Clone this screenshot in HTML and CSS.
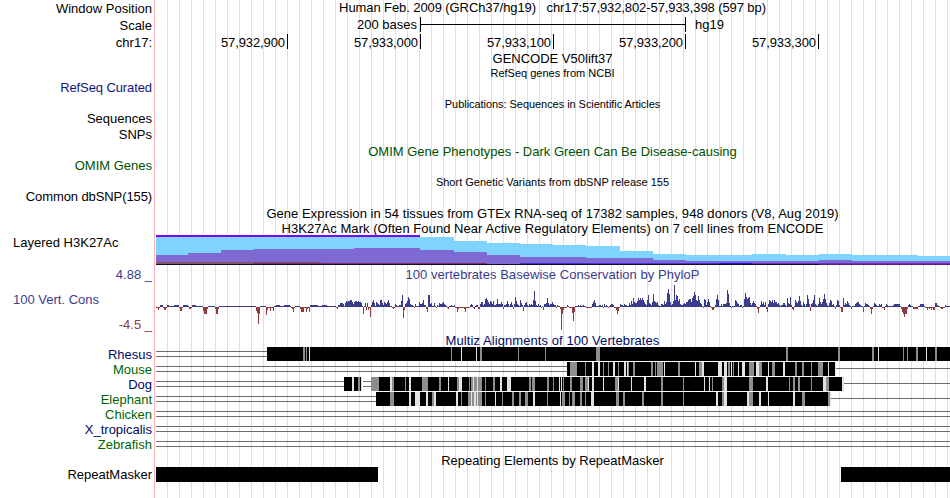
FILE: index.html
```
<!DOCTYPE html>
<html lang="en">
  <head>
    <meta charset="utf-8">
    <title>hg19 chr17:57,932,802-57,933,398</title>
    <link rel="stylesheet" href="styles.css">
  </head>
  <body>
    <main class="browser">
      <div class="row h17 top">
        <div class="label">Window Position</div>
        <div class="title position">Human Feb. 2009 (GRCh37/hg19) &nbsp; chr17:57,932,802-57,933,398 (597 bp)</div>
      </div>
      <div class="row h17 top">
        <div class="label">Scale</div>
        <div class="scale">
          <span class="scale-size">200 bases</span>
          <span class="scale-bar"></span>
          <span class="scale-db">hg19</span>
        </div>
      </div>
      <div class="row h17">
        <div class="label">chr17:</div>
        <div class="ruler">
          <span>57,932,900</span><span>57,933,000</span><span>57,933,100</span><span>57,933,200</span><span>57,933,300</span>
        </div>
      </div>

      <div class="row">
        <div class="label"></div>
        <div class="title">GENCODE V50lift37</div>
      </div>
      <div class="row">
        <div class="label"></div>
        <div class="title small">RefSeq genes from NCBI</div>
      </div>
      <div class="row raised">
        <div class="label navy tight">RefSeq Curated</div>
      </div>
      <div class="row pad">
        <div class="label"></div>
        <div class="title small pubs">Publications: Sequences in Scientific Articles</div>
      </div>
      <div class="row h16">
        <div class="label">Sequences</div>
      </div>
      <div class="row h16">
        <div class="label">SNPs</div>
      </div>
      <div class="row pad">
        <div class="label"></div>
        <div class="title green">OMIM Gene Phenotypes - Dark Green Can Be Disease-causing</div>
      </div>
      <div class="row">
        <div class="label green">OMIM Genes</div>
      </div>
      <div class="row h16 pad2">
        <div class="label"></div>
        <div class="title small">Short Genetic Variants from dbSNP release 155</div>
      </div>
      <div class="row h16">
        <div class="label tight">Common dbSNP(155)</div>
      </div>
      <div class="row pad">
        <div class="label"></div>
        <div class="title gtex">Gene Expression in 54 tissues from GTEx RNA-seq of 17382 samples, 948 donors (V8, Aug 2019)</div>
      </div>
      <div class="row pad">
        <div class="label"></div>
        <div class="title h3k">H3K27Ac Mark (Often Found Near Active Regulatory Elements) on 7 cell lines from ENCODE</div>
      </div>

      <div class="row h3k-row">
        <div class="label left">Layered H3K27Ac</div>
        <svg id="h3k27ac" width="795" height="30" viewBox="155 0 795 30"></svg>
      </div>

      <div class="row cons-row">
        <div class="cons-labels">
          <div class="label phylo">4.88 _</div>
          <div class="label left phylo">100 Vert. Cons</div>
          <div class="label red">-4.5 _</div>
        </div>
        <div class="cons-track">
          <div class="title phylo cons">100 vertebrates Basewise Conservation by PhyloP</div>
          <svg id="phylop" width="795" height="50" viewBox="155 0 795 50"></svg>
        </div>
      </div>

      <div class="row h14">
        <div class="label"></div>
        <div class="title blue multiz">Multiz Alignments of 100 Vertebrates</div>
      </div>
      <div class="row">
        <div class="label blue">Rhesus</div>
        <svg id="rhesus" width="795" height="15" viewBox="155 0 795 15"></svg>
      </div>
      <div class="row">
        <div class="label dkgreen">Mouse</div>
        <svg id="mouse" width="795" height="15" viewBox="155 0 795 15"></svg>
      </div>
      <div class="row">
        <div class="label blue">Dog</div>
        <svg id="dog" width="795" height="15" viewBox="155 0 795 15"></svg>
      </div>
      <div class="row">
        <div class="label dkgreen">Elephant</div>
        <svg id="elephant" width="795" height="15" viewBox="155 0 795 15"></svg>
      </div>
      <div class="row">
        <div class="label dkgreen">Chicken</div>
        <svg id="chicken" width="795" height="15" viewBox="155 0 795 15"></svg>
      </div>
      <div class="row">
        <div class="label blue">X_tropicalis</div>
        <svg id="tropicalis" width="795" height="15" viewBox="155 0 795 15"></svg>
      </div>
      <div class="row">
        <div class="label dkgreen">Zebrafish</div>
        <svg id="zebrafish" width="795" height="15" viewBox="155 0 795 15"></svg>
      </div>

      <div class="row pad">
        <div class="label"></div>
        <div class="title">Repeating Elements by RepeatMasker</div>
      </div>
      <div class="row">
        <div class="label">RepeatMasker</div>
        <svg id="rmsk" width="795" height="15" viewBox="155 0 795 15"></svg>
      </div>
    </main>
    <script src="script.js"></script>
  </body>
</html>
```

FILE: styles.css
```
body {
  margin: 0;
  background-color: #fff;
  color: #000;
  font-family: "Liberation Sans", Arial, Helvetica, sans-serif;
  font-size: 13px;
}
.browser {
  width: 950px;
  height: 498px;
  overflow: hidden;
  /* pink divider first, then the light guide lines every 12px */
  background:
    linear-gradient(#ffb4b4, #ffb4b4) 154px 0 / 1px 100% no-repeat,
    repeating-linear-gradient(to right, #dcdcfa 0, #dcdcfa 1px, transparent 1px, transparent 12px) 167px 0 / 783px 100% no-repeat;
}
.row {
  box-sizing: border-box;
  display: grid;
  grid-template-columns: 155px 795px;
  height: 15px;
  line-height: 15px;
  white-space: nowrap;
}
.h14 { height: 14px; }
.h16 { height: 16px; }
.h17 { height: 17px; line-height: 17px; }
.top { line-height: 15px; }
.top .label { line-height: 17px; }
.pad { padding-top: 1px; }
.pad2 { padding-top: 2px; }
.raised { line-height: 13px; }

.label {
  padding-right: 3px;
  text-align: right;
}
.label.left {
  padding-left: 13px;
  text-align: left;
}
.title { text-align: center; }
.small { font-size: 11px; }

/* spacing of the longer texts */
.position { letter-spacing: -.09px; }
.pubs { letter-spacing: -.05px; }
.gtex { letter-spacing: .055px; }
.h3k { letter-spacing: .05px; }
.cons { letter-spacing: .04px; }
.multiz { letter-spacing: .08px; }
.tight { letter-spacing: -.1px; }

.navy { color: #14147d; }
.blue { color: #000a64; }
.green { color: #005000; }
.dkgreen { color: #006400; }
.phylo { color: #3c3c8c; }
.red { color: #8c3c3c; }

svg {
  display: block;
  shape-rendering: crispEdges;
}

/* scale bar */
.scale {
  display: flex;
}
.scale-size {
  width: 262px;
  padding-right: 3px;
  text-align: right;
}
.scale-bar {
  box-sizing: border-box;
  width: 266px;
  height: 15px;
  border: solid #000;
  border-width: 0 1px;
  background: linear-gradient(#000, #000) 0 7px / 100% 1px no-repeat;
}
.scale-db { padding-left: 9px; }

/* base position ruler */
.ruler {
  display: grid;
  grid-template-columns: 133px 133px 133px 132px 133px;
  letter-spacing: -.1px;
}
.ruler span {
  box-sizing: border-box;
  height: 15px;
  padding-right: 2px;
  border-right: 1px solid #000;
  text-align: right;
}

.h3k-row {
  height: 32px;
}
.cons-row {
  height: 66px;
}
.cons-labels {
  display: flex;
  flex-direction: column;
  gap: 10px;
}
```

FILE: script.js
```
const svgNS = 'http://www.w3.org/2000/svg'

function rect(id, x, y, w, h, fill) {
  const el = document.createElementNS(svgNS, 'rect')
  el.setAttribute('x', x)
  el.setAttribute('y', y)
  el.setAttribute('width', w)
  el.setAttribute('height', h)
  el.setAttribute('fill', fill)
  document.getElementById(id).appendChild(el)
}

// ------------------------------------------------------
// Layered H3K27Ac, every step is [end x, top y]

function steps(id, start, list, bottom, fill) {
  let x = start
  list.forEach(([end, top]) => {
    rect(id, x, top, end - x, bottom - top, fill)
    x = end
  })
}

steps('h3k27ac', 156, [[454, 2], [487, 6], [520, 8], [553, 9], [586, 10], [620, 11], [653, 16], [686, 19], [752, 20], [786, 19], [819, 20], [852, 19], [918, 20], [950, 21]], 30, '#7fd4ff')
steps('h3k27ac', 156, [[188, 20], [221, 18], [254, 15], [354, 14], [420, 13], [454, 15], [487, 17], [520, 20], [586, 22], [653, 23], [686, 25], [819, 26], [852, 25], [950, 26]], 30, '#7f6ad4')
rect('h3k27ac', 156, 0, 264, 2, '#7f00ff')
rect('h3k27ac', 156, 27, 98, 2, '#80556a')
rect('h3k27ac', 254, 27, 67, 1, '#80556a')
rect('h3k27ac', 254, 28, 233, 1, '#7a2a6a')
rect('h3k27ac', 520, 28, 199, 1, '#4a30d8')
rect('h3k27ac', 719, 28, 33, 1, '#2a10d8')
rect('h3k27ac', 752, 28, 198, 1, '#6a30c0')
rect('h3k27ac', 156, 29, 663, 1, '#140a28')
rect('h3k27ac', 819, 29, 131, 1, '#601a80')

// ------------------------------------------------------
// PhyloP scores in pixels, [start x, values], 1 everywhere else

const scores = [
  [156, '-1 -1 -3 -1 2 2 2 -1 -3 -3 -1 2 2 1 1 1 1 1 2 2 2 2 2 -1 -4 -4 -1 2 2 2 2 2 1 -2 -2 -1 2 2 2 2'],
  [203, '-4 -7 -7 -7 -2'],
  [215, '-2 -7 -7 -2'],
  [256, '-4 -6 -17 -7'],
  [266, '-8 -3 -1 -1 -4 -1 -1 -4 1 1 2 2 2 2'],
  [284, '2 2 2 2 2 2 1 -1 -2 -5 -1'],
  [300, '-2 -5 -5 -5 -1 -1 -5 -2 -1 -5 2 2 2 2 2 2 2 2 1 1 1 1 2 2 2 2 2'],
  [336, '-1 -2 2 2 4 4 4 3 1 4 6 5 6 6 7 7 5 3 5 6 6 5 6 5 5 4 1 -7 1 4 -3 4 -3 -1 -10 2 5 7 4 1 5 4 3 2 7 7 4 2 5 4 3 5 7 4 1 1 -1 -2 -1 3 2 1 1 2 2 6 12 -11 -3 3 4 6 10 8 3 2 2 1 -1 3'],
  [418, '1 5 3 3 4 7 2 2 -2 -5 12 12 3 4 1 1 4 1 -1 2 1 4 3 3 4 5 3 2 1 -1 -2 1 1 2 1 1 2 -1 -1 -5 -2 -1 -1 -1 -1 -1 -2 -5 -1 -1 -1 -1 2 3 2 -1 -2 1 2 2 -2 -2 3 5 5 2 3 8 9 7 5 3 6 5 3 6 2 2 3 8 3 3 3 5 3 -2 2 2 3 6 3 1 3 5 2 -2 3 10 6 3 2 1 7 4 2 -4 2 4 5 2 1 3 2 3 2 7 16 6 2 1 3 1 2 -1 1 -3 3 3 4 9 4 2 3 3 5 3 2 2 -1 2'],
  [560, '-2 -23 -7 -3 -1 -1 -1 2 1 -1 -1 -1 -6 -14 -5 1 1 1 2 1 2 1 1 2 1 1 -1 -1 -1 -1 -1 -1 3 5 7 4 1 1 1 2 2 1 2 -1 3 1 2 1 -1 1 2 3 3 2 -1 -1 -3 -7 -4 -1 3 2 2 1 3 2 2 1 1 4 2 6 3 9 5 4 4 6 9 7 9 7 9 7 5 3 2 7 12 4 3 2 5 13 6 5 4 5 2 1 1 3 3 2 6 3 5 14 18 13 5 2 3 6 22 7 12 11 6 8 3 2 2 3 4 3 5'],
  [687, '5 7 8 8 5 9 11 15 12 7 6 11 7 4 3 1 -1 8 7 2 5 8 5 1 -1 -3 -3 -1 2 8 12 7 1 1 3 1 3 3 3 4 17 13 4 1 -1 1 1 1 7 6 4 3 1 2 2 -1 1 8 14 10 8 9 10 4 2 4 6 4 3 1 -2 -6 -1 2 6 3 5 2 5 -2 -5 3 7 6 5 7 4 7 5 5 3 4 2 1 2 2 4 4 2 1 9 4 3 10 2 -2 -3 1 7 5 4 6 11 6 2 1 5 3 1 3 12 8 3 -4 3 4 7 12 3 2 1 3 9 5 3 5 8 13 8 4 2 1 4 7 6 2 3 1 -2 2 7 6 2 -1 -5 -5 9 2 4 3 6 4 2 1 -2 1 1 1 3 4 5 5 3 2 1 1 -5 1 4 3 3 2 1 -2 -7 -2 1 4 3 2 1 1 3 2 3 -1 -1 -3 1 3 2'],
  [893, '2 3 3 3 3 3 3 1 -2 -5 -7 -10 -7 -7 -2 2 3 2 1 1 -2 -2 -2 -2 -2 1 1 3 3 3 3 1 -1 -1 -3 -1 -2 -1 -3 -1 -3 -3 4 4 2 1 1 -1 -2 -2 -1 -1 2 1']
]

const values = new Array(950).fill(1)
scores.forEach(([start, list]) => {
  list.split(' ').forEach((v, i) => { values[start + i] = Number(v) })
})
for (let x = 156; x < 950; x++) {
  const v = values[x]
  if (v > 0) {
    rect('phylop', x, 25 - v, 1, v, '#3c3c8c')
  } else {
    rect('phylop', x, 25, 1, -v, '#8c3c3c')
  }
}

// ------------------------------------------------------
// Multiz alignments, g = grey stripe, l = light stripe, "x+width"

function gap(id, from, to) {
  rect(id, from, 4, to - from, 1, '#6e6e6e')
  rect(id, from, 9, to - from, 1, '#6e6e6e')
}

function align(id, from, to, stripes) {
  rect(id, from, 0, to - from, 14, '#000')
  stripes.split(' ').forEach((s) => {
    const [x, w] = s.slice(1).split('+')
    rect(id, x, 0, w || 1, 14, s[0] === 'g' ? '#8e8e8e' : '#e2e2e2')
  })
}

gap('rhesus', 156, 267)
align('rhesus', 267, 950, 'g303+2 g306 l309 g451 l461 l476 g480+2 g518 g545 g596+4 g786+2 g838+2 g872+2 l878 g903 g907 g916+2 l926 g935+2')

gap('mouse', 156, 567)
align('mouse', 567, 835, 'g570+7 g585 l592+2 l598+2 g603 g608 l613+2 g618 l624+2 l627 g628 g633+2 g651+2 g655 g657+6 l664 g678+2 l695 g699+3 l702+2 l718+4 l724+3 g728+2 l731 g733 l738 l742+3 g749+5 l756+3 g759+3 l768 g772+3 l783+2 g795+2 g802+2 g811 g818+5 l828')
rect('mouse', 835, 0, 1, 14, '#e2e2e2')
rect('mouse', 836, 6, 114, 1, '#6e6e6e')

gap('dog', 156, 344)
align('dog', 344, 362, 'l352+2 g358+2 l361')
gap('dog', 363, 371)
align('dog', 371, 842, 'g371+8 l390+2 g392+2 g405 l409+2 g422+6 g439+2 l448 g457+2 l459+3 g469 g471+2 l473 g474+3 l477 g478+4 g485 g493+2 l500+2 l507+4 g529+2 g532+3 g547+2 g553 l559 l561 g563 g570+2 g580+3 g585+3 l588 l592+2 l603 g615+3 l618 l631 l644+2 g661+2 g683 l704 l709 g712 g722+2 l724+3 g749+4 l766+2 g789 g793+2 g798+2 g811 l823+3 g826+3')
rect('dog', 842, 0, 2, 14, '#e2e2e2')
rect('dog', 844, 6, 106, 1, '#6e6e6e')

gap('elephant', 156, 376)
align('elephant', 376, 830, 'g390+4 l409+2 l415+5 l426+2 g432+2 l434+2 l456+2 g461 g468+3 l471 g472+2 l474+2 g476 l477 g478+4 g485 l495 g502 g512+2 g519+2 g525+3 l533+2 g547 l560 g562+3 g569 g572+3 g580+2 g585 l591+3 g616+3 g623+2 g642+2 g661+2 g683 l716+2 g722+2 l724+3 l747+2 g749+4 l759+2 l768 l793+2 g802+3 g828+2')
rect('elephant', 830, 0, 1, 14, '#e2e2e2')
rect('elephant', 831, 6, 119, 1, '#6e6e6e')

gap('chicken', 156, 950)
gap('tropicalis', 156, 950)
gap('zebrafish', 156, 950)

// RepeatMasker
rect('rmsk', 156, 0, 222, 15, '#000')
rect('rmsk', 841, 0, 109, 15, '#000')
```
